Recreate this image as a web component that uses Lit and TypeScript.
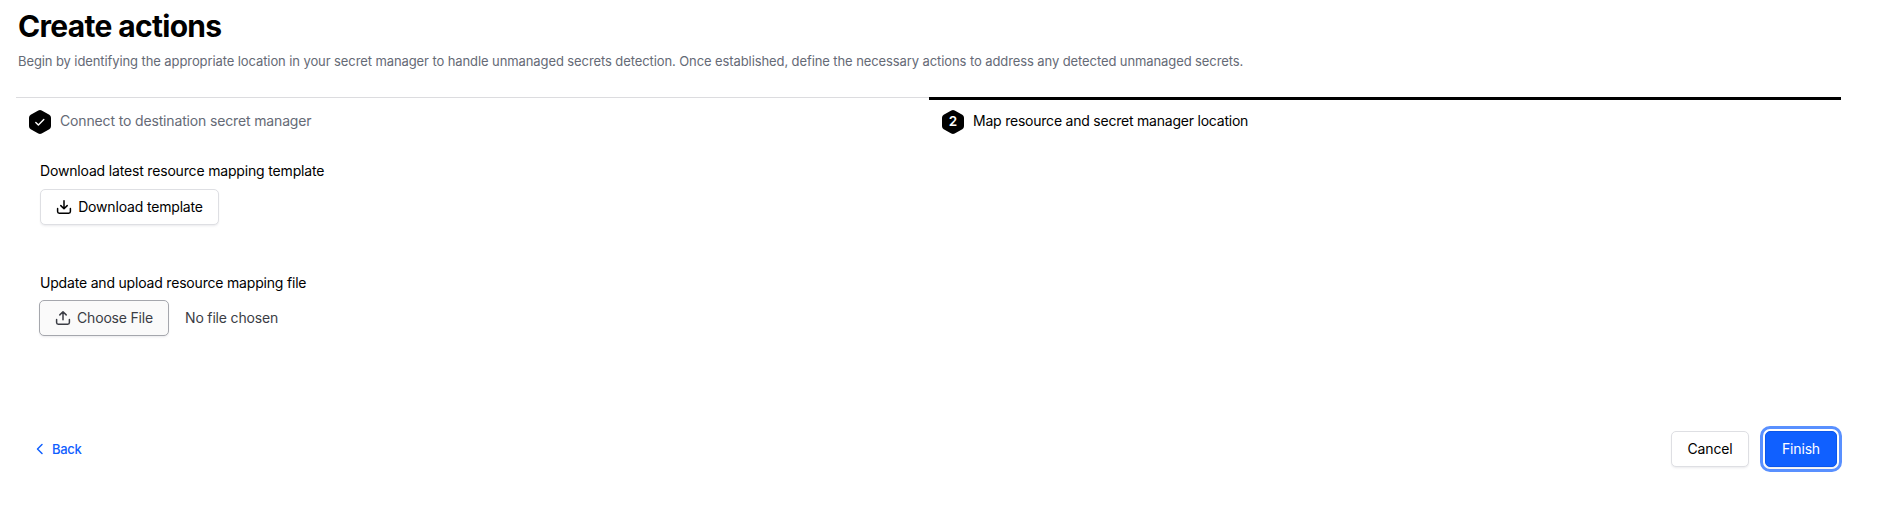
import { LitElement, html, svg, css } from "lit";
import { customElement } from "lit/decorators.js";

const hexagon = svg`<path d="M9.3.5a3.4 3.4 0 0 1 3.4 0l7.6 4.3A3.4 3.4 0 0 1 22 7.8v8.4a3.4 3.4 0 0 1-1.7 3l-7.6 4.3a3.4 3.4 0 0 1-3.4 0l-7.6-4.3A3.4 3.4 0 0 1 0 16.2V7.8a3.4 3.4 0 0 1 1.7-3z" fill="#000"/>`;

@customElement("app-root")
export class AppRoot extends LitElement {
  static styles = css`
    :host {
      display: block;
      box-sizing: border-box;
      height: 518px;
      padding: 8px 47px 0 16px;
      background: #fff;
      color: #000;
      font: 14px/20px Inter, "Liberation Sans", sans-serif;
      letter-spacing: -0.17px;
    }
    h1 { margin: 0 0 0 2px; font-size: 30px; line-height: 36px; font-weight: 700; letter-spacing: -0.68px; }
    .intro { margin: 7px 0 26px 2px; font-size: 13px; color: #656a76; white-space: nowrap; letter-spacing: -0.095px; }
    .steps { display: grid; grid-template-columns: 913px 1fr; height: 47px; }
    .step { display: flex; align-items: flex-start; gap: 9px; padding: 12px 0 0 13px; border-top: 1px solid #dcdcdf; color: #656a76; letter-spacing: -0.15px; }
    .step.current { border-top: 3px solid #000; padding-top: 10px; color: #000; letter-spacing: -0.22px; }
    .step svg { display: block; flex: none; }
    .title { margin-top: 1px; }
    .mark { display: grid; width: 22px; height: 24px; }
    .mark > * { grid-area: 1 / 1; }
    .num { color: #fff; font-size: 13.5px; font-weight: 600; line-height: 23px; text-align: center; letter-spacing: 0; }
    .field { padding-left: 24px; height: 112px; }
    .first { padding-top: 17px; height: 95px; margin-bottom: 17px; }
    .label { height: 28px; }
    .upload .label { height: 27px; letter-spacing: -0.19px; }
    .row { display: flex; align-items: center; }
    button { box-sizing: border-box; display: flex; align-items: center; justify-content: center; height: 36px; margin: 0; padding: 0; border: 1px solid #dedfe3; border-radius: 5px; background: #fff; color: #000; font: inherit; letter-spacing: inherit; box-shadow: 0 1px 1px #656a760d, 0 2px 2px #656a760d; }
    .download { width: 179px; gap: 6px; }
    .choose { width: 130px; gap: 6px; margin-left: -1px; background: #fafafa; border-color: #a5a7ad; color: #3b3d45; letter-spacing: -0.2px; }
    .none { margin-left: 16px; color: #3b3d45; }
    .footer { display: flex; align-items: center; height: 36px; margin-top: 46px; padding: 0 4px 0 20px; }
    .back { display: flex; align-items: center; gap: 8px; color: #1060ff; font-size: 13px; font-weight: 500; margin-right: auto; letter-spacing: -0.3px; }
    .cancel { width: 78px; margin-right: 16px; }
    .finish { width: 72px; background: #1060ff; border-color: #0c56e9; color: #fff; outline: 3px solid #5990ff; outline-offset: 2px; }
  `;

  render() {
    return html`
      <h1>Create actions</h1>
      <div class="intro">Begin by identifying the appropriate location in your secret manager to handle unmanaged secrets detection. Once established, define the necessary actions to address any detected unmanaged secrets.</div>
      <div class="steps">
        <div class="step">
          <svg width="22" height="24" viewBox="0 0 22 24">${hexagon}<path d="m6.8 12.4 2.6 2.6 5.4-5.4" fill="none" stroke="#fff" stroke-width="1.4" stroke-linecap="round" stroke-linejoin="round"/></svg>
          <span class="title">Connect to destination secret manager</span>
        </div>
        <div class="step current">
          <span class="mark"><svg width="22" height="24" viewBox="0 0 22 24">${hexagon}</svg><span class="num">2</span></span>
          <span class="title">Map resource and secret manager location</span>
        </div>
      </div>
      <div class="field first">
        <div class="label">Download latest resource mapping template</div>
        <button class="download">
          <svg width="16" height="16" viewBox="0 0 16 16" fill="none" stroke="currentColor" stroke-width="1.5" stroke-linecap="round" stroke-linejoin="round"><path d="M8 1.8v7.7M4.8 6.6 8 9.7l3.2-3.1M1.6 9.5v3.1c0 .9.7 1.6 1.6 1.6h9.6c.9 0 1.6-.7 1.6-1.6V9.5"/></svg>
          <span>Download template</span>
        </button>
      </div>
      <div class="field upload">
        <div class="label">Update and upload resource mapping file</div>
        <div class="row">
          <button class="choose">
            <svg width="16" height="16" viewBox="0 0 16 16" fill="none" stroke="currentColor" stroke-width="1.5" stroke-linecap="round" stroke-linejoin="round"><path d="M8 9.7V1.8M4.8 4.9 8 1.8l3.2 3.1M1.6 9.5v3.1c0 .9.7 1.6 1.6 1.6h9.6c.9 0 1.6-.7 1.6-1.6V9.5"/></svg>
            <span>Choose File</span>
          </button>
          <span class="none">No file chosen</span>
        </div>
      </div>
      <div class="footer">
        <span class="back"><svg width="8" height="12" viewBox="0 0 8 12" fill="none" stroke="currentColor" stroke-width="1.5" stroke-linecap="round" stroke-linejoin="round"><path d="M6 1.5 1.5 6 6 10.5"/></svg><span>Back</span></span>
        <button class="cancel">Cancel</button>
        <button class="finish">Finish</button>
      </div>
    `;
  }
}
